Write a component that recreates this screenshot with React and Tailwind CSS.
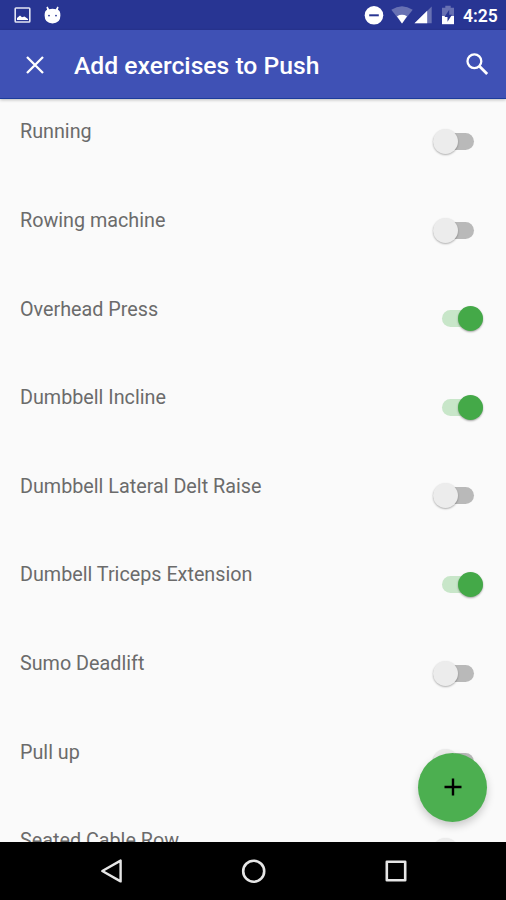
import React from 'react';

const exercises = [
  { name: "Running", selected: false },
  { name: "Rowing machine", selected: false },
  { name: "Overhead Press", selected: true },
  { name: "Dumbbell Incline", selected: true },
  { name: "Dumbbell Lateral Delt Raise", selected: false },
  { name: "Dumbell Triceps Extension", selected: true },
  { name: "Sumo Deadlift", selected: false },
  { name: "Pull up", selected: false },
  { name: "Seated Cable Row", selected: false },
];

const StatusBar = () => (
  <div className="h-[30px] shrink-0 bg-[#283593] flex items-center justify-between pl-3.5 pr-2 text-white">
    <div className="flex items-center gap-[13px]">
      <svg width="17" height="16" viewBox="0 0 17 16">
        <rect x="1.2" y="1" width="14.6" height="14" rx="0.8" fill="none" stroke="#e2e4f4" strokeWidth="1.6" />
        <path d="M3 13V11L6 8.5L8 10.3L10.5 9.5L14 12V13Z" fill="white" />
      </svg>
      <svg width="17" height="18" viewBox="0 0 17 18">
        <path d="M3.6 0.5L5.2 3.2Q8.5 2.4 11.8 3.2L13.4 0.5L14.6 1.2L13.9 3.8Q16.4 4.6 16.4 9.6Q16.4 17.4 8.5 17.4Q0.6 17.4 0.6 9.6Q0.6 4.6 3.1 3.8L2.4 1.2Z" fill="white" />
        <circle cx="5" cy="9.6" r="0.9" fill="#283593" />
        <circle cx="12" cy="9.6" r="0.9" fill="#283593" />
      </svg>
    </div>

    <div className="flex items-center">
      <svg width="20" height="20" viewBox="0 0 20 20">
        <circle cx="10" cy="10.3" r="9.3" fill="white" />
        <path d="M5.2 10.3H14.8" stroke="#283593" strokeWidth="2" />
      </svg>
      <svg className="ml-[7px]" width="22" height="18" viewBox="0 0 22 18">
        <path d="M0.3 3.8Q11 -3.4 21.7 3.8L11 17.6Z" fill="#6871b3" />
        <path d="M6 10.2Q11 7.4 16 10.2L11 17.6Z" fill="white" />
      </svg>
      <svg className="ml-px" width="18" height="18" viewBox="0 0 18 18">
        <path d="M0.5 17.2L17.7 0.5V17.2Z" fill="#6871b3" />
        <path d="M0.5 17.2L13.2 4.8V17.2Z" fill="white" />
      </svg>
      <svg className="ml-[9px]" width="14" height="20" viewBox="0 0 14 20">
        <path d="M4.3 0.8H9.7V2.8H13V11H1V2.8H4.3Z" fill="#6871b3" />
        <path d="M1 11H13V19.2H1Z" fill="white" />
        <path d="M8.2 4.8L3.5 12H6.5V16.8L11 9.7H8.2Z" fill="#283593" />
      </svg>
      <span className="ml-2 mt-0.5 w-[35px] text-[17.5px] leading-5 font-semibold whitespace-nowrap">4:25</span>
    </div>
  </div>
);

const AppBar = () => (
  <header className="relative z-10 h-[69px] shrink-0 bg-[#3f51b5] border-b border-[#1c3c9c] shadow-[0_1px_3px_rgba(0,0,0,0.25)] flex items-center pl-[26px] pr-[17px] text-white">
    <button aria-label="Close" className="mt-0.5">
      <svg width="18" height="18" viewBox="0 0 18 18" fill="none" stroke="currentColor" strokeWidth="2.3">
        <path d="M1 1L17 17M17 1L1 17" />
      </svg>
    </button>
    <h1 className="ml-[30px] mt-1 flex-1 text-[24.7px] leading-8 font-medium whitespace-nowrap">
      Add exercises to Push
    </h1>
    <button aria-label="Search">
      <svg width="24" height="24" viewBox="0 0 24 24" fill="none" stroke="currentColor">
        <circle cx="9.4" cy="9.2" r="6.9" strokeWidth="2.3" />
        <path d="M14.2 14L22.2 22" strokeWidth="2.8" />
      </svg>
    </button>
  </header>
);

const Toggle = ({ on }) => {
  if (on) {
    return (
      <div className="relative mt-[34px] mr-[23px] w-[41px] h-[17px] rounded-full bg-[#c8e6c9]">
        <div className="absolute right-0 -top-1 size-[25px] rounded-full bg-[#44a948] shadow-[0_1px_2px_rgba(0,0,0,0.35)]" />
      </div>
    );
  }
  return (
    <div className="relative mt-[34px] mr-8 w-[41px] h-[17px] rounded-full bg-[#b9b9b9]">
      <div className="absolute left-0 -top-1 size-[25px] rounded-full bg-[#ececec] shadow-[0_1px_2px_rgba(0,0,0,0.3)]" />
    </div>
  );
};

const NavBar = () => (
  <nav className="h-[58px] shrink-0 bg-black flex items-center justify-between pl-[100px] pr-[98px]">
    <svg width="24" height="26" viewBox="0 0 24 26" fill="none" stroke="#e6e6e6" strokeWidth="2.4" strokeLinejoin="round">
      <path d="M2.3 13L20.6 2.6V23.4Z" />
    </svg>
    <svg width="26" height="26" viewBox="0 0 26 26" fill="none" stroke="#e6e6e6" strokeWidth="2.6">
      <circle cx="12.7" cy="13.2" r="10.5" />
    </svg>
    <svg width="24" height="24" viewBox="0 0 24 24" fill="none" stroke="#e6e6e6" strokeWidth="2.6" strokeLinejoin="round">
      <rect x="2.8" y="2.8" width="18.4" height="18.4" />
    </svg>
  </nav>
);

const App = () => {
  return (
    <div className="w-full h-screen overflow-hidden flex flex-col bg-[#fafafa] font-['Roboto',sans-serif]">
      <StatusBar />
      <AppBar />

      <main className="relative flex-1 min-h-0 overflow-hidden">
        <ul>
          {exercises.map((exercise) => (
            <li key={exercise.name} className="h-[88.6px] flex items-start justify-between">
              <span className="mt-[21.4px] ml-5 text-[19.75px] leading-6 text-[#6b6b6b] whitespace-nowrap">
                {exercise.name}
              </span>
              <Toggle on={exercise.selected} />
            </li>
          ))}
        </ul>

        {/* Floating add button */}
        <button
          aria-label="Add exercise"
          className="absolute right-[19px] bottom-[20.5px] size-[69px] rounded-full bg-[#4caf50] shadow-[0_4px_8px_rgba(0,0,0,0.2)] flex items-center justify-center"
        >
          <svg width="18" height="18" viewBox="0 0 18 18" stroke="black" strokeWidth="2.4">
            <path d="M9 0.5V17.5M0.5 9H17.5" />
          </svg>
        </button>
      </main>

      <NavBar />
    </div>
  );
};

export default App;
